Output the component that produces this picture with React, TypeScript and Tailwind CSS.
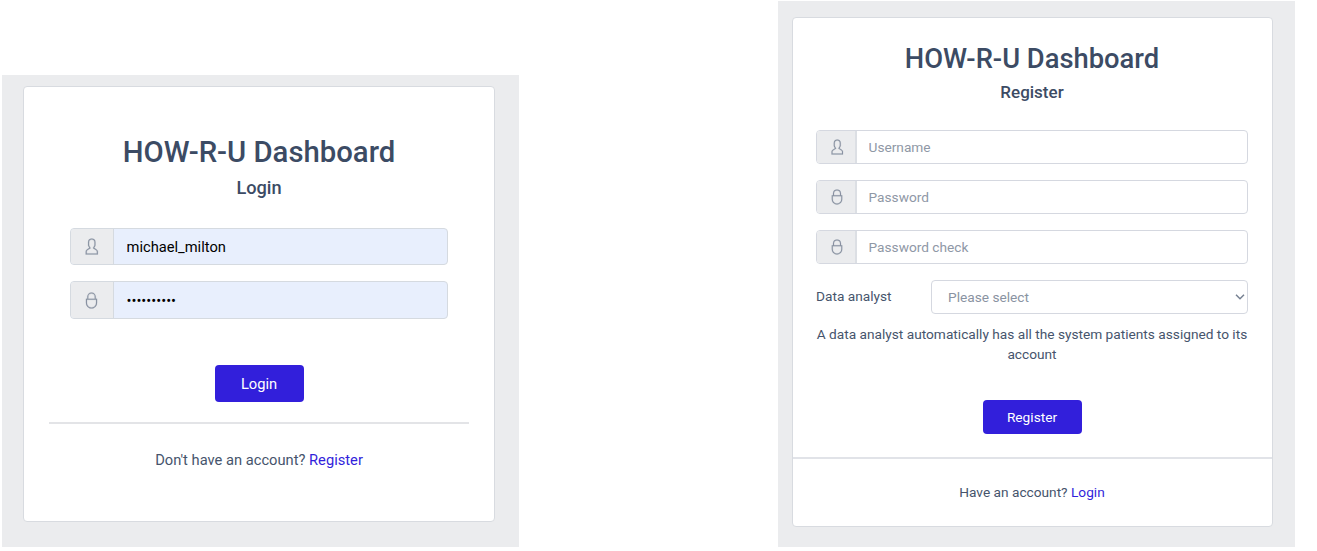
import React from "react";

const USER_PATH =
  "M411.6,343.656l-72.823-47.334,27.455-50.334A80.23,80.23,0,0,0,376,207.681V128a112,112,0,0,0-224,0v79.681a80.236,80.236,0,0,0,9.768,38.308l27.455,50.333L116.4,343.656A79.725,79.725,0,0,0,80,410.732V496H448V410.732A79.727,79.727,0,0,0,411.6,343.656ZM416,464H112V410.732a47.836,47.836,0,0,1,21.841-40.246l97.66-63.479-41.64-76.341A48.146,48.146,0,0,1,184,207.681V128a80,80,0,0,1,160,0v79.681a48.146,48.146,0,0,1-5.861,22.985L296.5,307.007l97.662,63.479h0A47.836,47.836,0,0,1,416,410.732Z";
const LOCK_PATH =
  "M384,200V144a128,128,0,0,0-256,0v56H88V328c0,92.635,75.364,168,168,168s168-75.365,168-168V200ZM160,144a96,96,0,0,1,192,0v56H160ZM392,328c0,74.99-61.01,136-136,136s-136-61.01-136-136V232H392Z";

function Icon({ path, className }: { path: string; className: string }) {
  return (
    <svg viewBox="0 0 512 512" fill="currentColor" stroke="currentColor" strokeWidth="6" className={className} aria-hidden="true">
      <path d={path} />
    </svg>
  );
}

function LoginField({ icon, type, value, className }: { icon: string; type: string; value: string; className: string }) {
  return (
    <div className={`flex overflow-hidden rounded-[4px] border border-[#d5dae0] bg-[#e8effd] ${className}`}>
      <span className="flex w-[42.5px] shrink-0 items-center justify-center border-r border-[#d5dae0] bg-[#ebecee] text-[#8a93a2]">
        <Icon path={icon} className="size-[17px]" />
      </span>
      <input
        type={type}
        defaultValue={value}
        className="min-w-0 flex-1 bg-transparent pt-[2px] pl-[13px] text-[14.7px] text-black outline-none"
      />
    </div>
  );
}

function RegisterField({ icon, type, label }: { icon: string; type: string; label: string }) {
  return (
    <div className="flex h-[34px] overflow-hidden rounded-[4px] border border-[#d5d8e0] bg-white">
      <span className="flex w-[40px] shrink-0 items-center justify-center border-r-2 border-[#dcdfe4] bg-[#ebecee] pl-px text-[#8a93a2]">
        <Icon path={icon} className="size-4" />
      </span>
      <input
        type={type}
        placeholder={label}
        className="min-w-0 flex-1 bg-transparent pt-px pl-[11.5px] text-[13.7px] outline-none placeholder:text-[#8f98a6]"
      />
    </div>
  );
}

function LoginPanel() {
  return (
    <section className="mt-[75px] h-[472px] w-[517.5px] bg-[#ebecee] pt-[11px] pl-[21.5px]">
      <div className="flex h-[436px] w-[472px] flex-col rounded-[4px] border border-[#d8dbe0] bg-white px-[25px] text-center">
        <h1 className="mt-[47px] h-[36px] text-[29.3px] leading-[36px] font-medium">HOW-R-U Dashboard</h1>
        <h2 className="mt-[6px] h-6 text-[18.2px] leading-6 font-medium">Login</h2>
        <div className="mt-[28px] flex flex-col gap-4 px-[21px]">
          <LoginField icon={USER_PATH} type="text" value="michael_milton" className="h-[37px]" />
          <LoginField icon={LOCK_PATH} type="password" value="1234567890" className="h-[38px]" />
        </div>
        <button className="mt-[46px] h-[37px] w-[89px] self-center rounded-[4px] bg-[#321fdb] pt-px text-[14.7px] text-white">Login</button>
        <hr className="mt-[20px] border-t-2 border-[#e3e4e7]" />
        <p className="mt-[24px] text-[14.7px] leading-6 text-[#46546c]">
          Don't have an account? <a className="text-[#321fdb]">Register</a>
        </p>
      </div>
    </section>
  );
}

function RegisterPanel() {
  return (
    <section className="mt-px h-[546px] w-[517px] bg-[#ebecee] pt-[16px] pl-[14px]">
      <div className="flex h-[510px] w-[481px] flex-col rounded-[4px] border border-[#d8dbe0] bg-white text-center text-[#46546c]">
        <div className="flex h-[439px] flex-col pr-6 pl-[23px]">
          <h1 className="mt-[23px] h-[36px] text-[27.35px] leading-[36px] font-medium text-[#3c4b64]">HOW-R-U Dashboard</h1>
          <h2 className="mt-[3px] h-6 text-[17px] leading-6 font-medium text-[#3c4b64]">Register</h2>
          <div className="mt-[26px] flex flex-col gap-4">
            <RegisterField icon={USER_PATH} type="text" label="Username" />
            <RegisterField icon={LOCK_PATH} type="password" label="Password" />
            <RegisterField icon={LOCK_PATH} type="password" label="Password check" />
            <div className="flex h-[34px] items-center text-[13.7px]">
              <label className="w-[115px] pb-px text-left">Data analyst</label>
              <div className="flex h-full flex-1 items-center justify-between rounded-[4px] border border-[#d5d8e0] pr-[2px] pl-[16px] text-[#8a93a2]">
                <span>Please select</span>
                <svg viewBox="0 0 10 6" className="h-[6px] w-[10px]" fill="none" stroke="#768192" strokeWidth="1.5">
                  <path d="M1 .7 5 4.7 9 .7" />
                </svg>
              </div>
            </div>
          </div>
          <p className="-mx-2 mt-[10px] text-[13.7px] leading-5">
            A data analyst automatically has all the system patients assigned to its
            <br />
            account
          </p>
          <button className="mt-[36px] h-[34px] w-[99px] self-center rounded-[4px] bg-[#321fdb] text-[13.7px] text-white">Register</button>
        </div>
        <div className="flex-1 border-t-2 border-[#e1e3e8] pt-[21px] pr-px text-[13.7px] leading-6">
          Have an account? <a className="text-[#321fdb]">Login</a>
        </div>
      </div>
    </section>
  );
}

export default function App() {
  return (
    <main className="flex h-[551px] w-[1317px] items-start gap-[259px] overflow-hidden bg-white pl-[1.5px] font-['Roboto',sans-serif] text-[#3c4b64]">
      <LoginPanel />
      <RegisterPanel />
    </main>
  );
}
